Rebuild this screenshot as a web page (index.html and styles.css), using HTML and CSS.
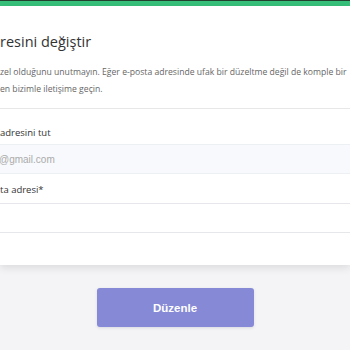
FILE: index.html
```html
<!DOCTYPE html>
<html lang="tr">
<head>
<meta charset="utf-8">
<title>E-posta adresini değiştir</title>
<link rel="stylesheet" href="styles.css">
</head>
<body>
<div class="topline"></div>
<div class="accent"></div>
<section class="card">
  <h1 class="title">resini değiştir</h1>
  <p class="desc">
    <span class="line">zel olduğunu unutmayın. Eğer e-posta adresinde ufak bir düzeltme değil de komple bir</span>
    <span class="line">en bizimle iletişime geçin.</span>
  </p>
  <div class="divider"></div>
  <form class="form">
    <label class="label">adresini tut</label>
    <div class="input readonly"><span class="placeholder">@gmail.com</span></div>
    <label class="label second">ta adresi*</label>
    <div class="input"></div>
  </form>
</section>
<div class="actions">
  <button class="btn" type="button">Düzenle</button>
</div>
</body>
</html>
```
FILE: styles.css
```css
html, body {
  margin: 0;
  padding: 0;
}
body {
  width: 350px;
  height: 350px;
  overflow: hidden;
  background: #f4f4f6;
  font-family: "Open Sans", "Noto Sans", sans-serif;
}
.topline {
  height: 1px;
  background: #23412f;
}
.accent {
  height: 5px;
  background: #36c079;
}
.card {
  background: #ffffff;
  padding: 26px 0 32px 0;
  box-shadow: 0 3px 8px rgba(0, 0, 0, 0.10);
  position: relative;
}
.title {
  margin: 0;
  font-size: 14.5px;
  line-height: 20px;
  font-weight: 400;
  color: #333;
  white-space: nowrap;
}
.desc {
  margin: 12px 0 10px 0;
  font-size: 8.65px;
  line-height: 17px;
  color: #666;
}
.line {
  display: block;
  white-space: nowrap;
}
.divider {
  height: 1px;
  background: #e7e7e9;
}
.form {
  display: flex;
  flex-direction: column;
  padding-top: 17px;
}
.label {
  font-size: 9.5px;
  line-height: 14px;
  color: #333;
  margin-bottom: 4px;
  white-space: nowrap;
}
.label.second {
  margin-top: 9px;
  margin-bottom: 6px;
}
.input {
  box-sizing: border-box;
  height: 30px;
  border-top: 1px solid #e6e7ea;
  border-bottom: 1px solid #e6e7ea;
  background: #ffffff;
  display: flex;
  align-items: center;
}
.input.readonly {
  background: #f7f9fc;
  border-color: #edf0f3;
}
.placeholder {
  font-family: "Liberation Sans", Arial, sans-serif;
  font-size: 10px;
  color: #ababab;
  margin-left: -1px;
  display: block;
}
.actions {
  display: flex;
  justify-content: center;
  padding-top: 23px;
}
.btn {
  width: 157px;
  height: 39px;
  border: none;
  border-radius: 3px;
  background: #8589d6;
  color: #ffffff;
  font-family: "Liberation Sans", Arial, sans-serif;
  font-weight: 700;
  font-size: 11.5px;
  box-shadow: 0 1px 3px rgba(60, 60, 120, 0.15);
  padding: 0;
}
```
